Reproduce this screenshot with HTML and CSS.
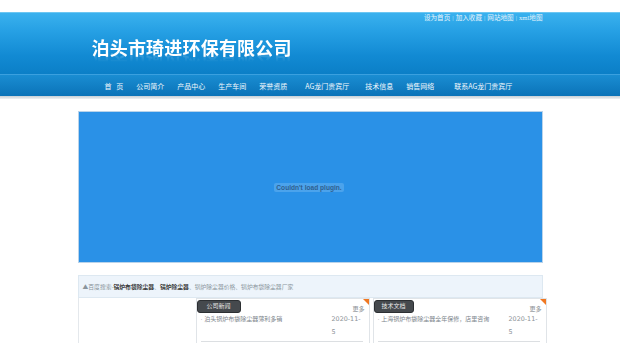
FILE: index.html
```html
<!DOCTYPE html>
<html lang="zh-CN">
<head>
<meta charset="utf-8">
<title>泊头市琦进环保有限公司</title>
<link rel="stylesheet" href="styles.css">
</head>
<body>
<div class="top-strip"></div>
<header class="header">
  <div class="header-main">
    <div class="wrap">
      <div class="toplinks"><a>设为首页</a><span class="sep">|</span><a>加入收藏</a><span class="sep">|</span><a>网站地图</a><span class="sep">|</span><a>xml地图</a></div>
      <div class="title">泊头市琦进环保有限公司</div>
    </div>
  </div>
  <nav class="nav">
    <div class="wrap nav-list">
      <a class="nav-first">首&nbsp;&nbsp;&nbsp;页</a>
      <a>公司简介</a>
      <a>产品中心</a>
      <a>生产车间</a>
      <a>荣誉资质</a>
      <a class="gap5">AG龙门贵宾厅</a>
      <a class="gap3">技术信息</a>
      <a>销售网络</a>
      <a class="gap7">联系AG龙门贵宾厅</a>
    </div>
  </nav>
</header>
<div class="shade"></div>
<main class="wrap content">
  <div class="flash">
    <span class="plugin">Couldn't load plugin.</span>
  </div>
  <div class="search">▲百度搜索-<b>锅炉布袋除尘器</b>、<b>锅炉除尘器</b>、锅炉除尘器价格、锅炉布袋除尘器厂家</div>
  <div class="lower">
    <div class="side"></div>
    <section class="panel">
      <div class="panel-head"><span class="tab">公司新闻</span><span class="more">更多</span><span class="corner"></span></div>
      <ul class="list">
        <li><span class="item">· 泊头锅炉布袋除尘器薄利多销</span><span class="date">2020-11-5</span></li>
        <li><span class="item">· 除尘布袋厚度有什么讲究，耐磨性</span><span class="date">2020-4-</span></li>
      </ul>
    </section>
    <section class="panel panel2">
      <div class="panel-head"><span class="tab">技术文档</span><span class="more">更多</span><span class="corner"></span></div>
      <ul class="list">
        <li><span class="item">· 上海锅炉布袋除尘器全年保修，店里咨询</span><span class="date">2020-11-5</span></li>
        <li><span class="item">· 除尘器能清点横向的应用分析</span><span class="date">2020-4-</span></li>
      </ul>
    </section>
  </div>
</main>
</body>
</html>
```

FILE: styles.css
```css
* { box-sizing: border-box; }
html, body { margin: 0; padding: 0; }
body {
  background: #fff;
  font-family: "Liberation Sans", "Noto Sans CJK SC", sans-serif;
  overflow: hidden;
  width: 620px;
  height: 343px;
}
a { color: inherit; text-decoration: none; }
.wrap { width: 465px; margin: 0 auto; }

.top-strip { height: 12px; background: #fff; }

.header { background: #0a7cc3; }
.header-main {
  height: 62px;
  background: linear-gradient(#3ab1ee 0%, #26a0e4 30%, #128ad3 70%, #0b7fc7 100%);
  border-top: 1px solid #6cc6f2;
}
.toplinks {
  display: flex;
  justify-content: flex-end;
  font-family: "Liberation Serif", "Noto Sans CJK SC", serif;
  font-size: 6.6px;
  line-height: 9px;
  color: #e6f4fc;
  padding-top: 0;
}
.toplinks .sep { margin: 0 2px; color: #bfe2f6; }
.title {
  margin: 14px 0 0 14px;
  font-family: "Noto Sans CJK SC", sans-serif;
  font-weight: 700;
  font-size: 18px;
  line-height: 22px;
  letter-spacing: 0.2px;
  color: #ffffff;
  -webkit-box-reflect: below -6px linear-gradient(transparent 55%, rgba(255,255,255,0.25));
}

.nav {
  height: 22px;
  background: linear-gradient(#1a8dd2, #0a73b8);
  border-top: 1px solid #3aa0df;
}
.nav-list {
  display: flex;
  align-items: center;
  height: 21px;
  gap: 13px;
  padding-left: 27px;
  font-family: "Noto Sans CJK SC", sans-serif;
  font-size: 7px;
  color: #f2f9fd;
}
.gap5 { margin-left: 5px; }
.gap3 { margin-left: 3px; }
.gap7 { margin-left: 7px; }

.shade {
  height: 3px;
  background: linear-gradient(#c6cfd6, #eef1f3);
}

.content { padding-top: 12px; }

.flash {
  height: 152px;
  background: #2a91e7;
  border: 1px solid #b9d3ea;
  display: flex;
  align-items: center;
  justify-content: center;
}
.plugin {
  font-family: "Liberation Sans", sans-serif;
  font-size: 6.6px;
  font-weight: 700;
  color: #2f5f8f;
  background: #4ba3ec;
  border-radius: 2px;
  padding: 1px 2px;
  margin-top: 1px;
  margin-left: -2px;
}

.search {
  margin-top: 12px;
  height: 23px;
  background: #edf4fb;
  border: 1px solid #dde8f1;
  font-family: "Noto Sans CJK SC", sans-serif;
  font-size: 5.8px;
  line-height: 21px;
  color: #8a949c;
  padding-left: 4px;
}
.search b { color: #3a3a3a; font-weight: 700; }

.lower {
  display: flex;
  height: 60px;
  border-left: 1px solid #e4e8ec;
}
.side { width: 117px; flex: none; }
.panel {
  width: 174px;
  flex: none;
  border: 1px solid #e0e4e8;
  border-bottom: none;
  padding: 1px 6px 0 4px;
  position: relative;
}
.panel2 { margin-left: 3px; width: 174px; }
.panel-head {
  display: flex;
  align-items: flex-start;
  justify-content: space-between;
  height: 13px;
  margin-left: -4px;
}
.tab {
  background: #45494d;
  color: #e8e8e8;
  font-size: 6px;
  line-height: 11px;
  height: 13px;
  width: 44px;
  text-align: center;
  border-radius: 3px;
  border: 1px solid #2c2f32;
}
.panel2 .tab { width: 40px; }
.more {
  font-size: 6px;
  line-height: 8px;
  color: #8a8f94;
  margin-top: 5px;
  margin-right: -2px;
}
.corner {
  position: absolute;
  top: 0;
  right: 0;
  width: 0;
  height: 0;
  border-top: 6px solid #f07822;
  border-left: 6px solid transparent;
}
.list { list-style: none; margin: 0; padding: 0; }
.list li {
  display: flex;
  justify-content: space-between;
  border-bottom: 1px solid #dcdfe2;
  padding: 0 0 2px;
  margin-bottom: 0;
}
.list li + li { padding-top: 1px; }
.item {
  font-size: 6px;
  line-height: 13px;
  color: #7d858c;
}
.date {
  width: 31px;
  flex: none;
  line-height: 13px;
  color: #8c9297;
  font-family: "DejaVu Sans", sans-serif;
  font-size: 6.4px;
}
```
